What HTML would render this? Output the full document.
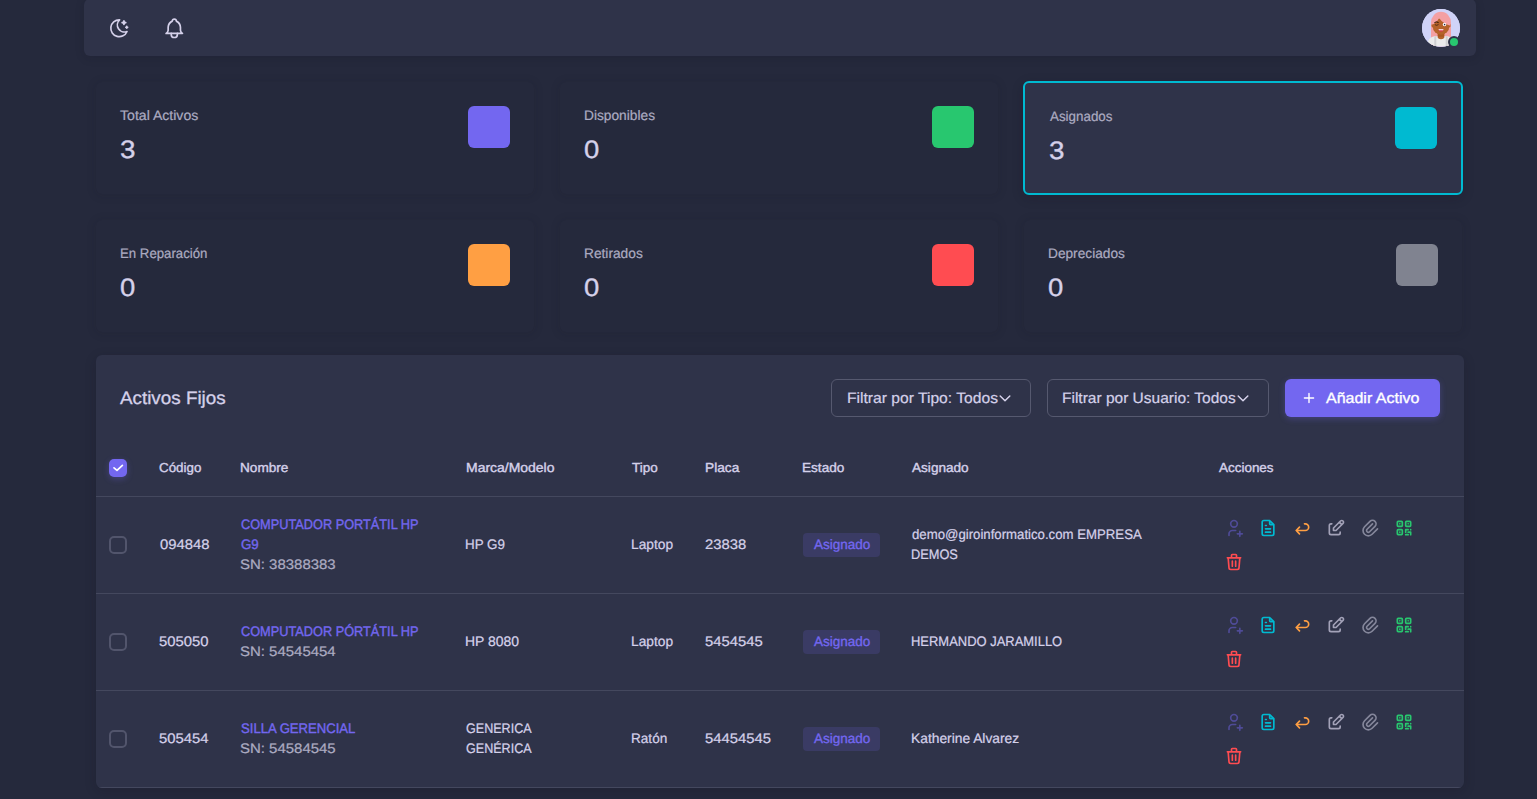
<!DOCTYPE html>
<html lang="es">
<head>
<meta charset="utf-8">
<title>Activos Fijos</title>
<style>
*{box-sizing:border-box;margin:0;padding:0}
html,body{width:1537px;height:799px;overflow:hidden;background:#25293c}
body{font-family:"Liberation Sans",sans-serif;color:#acabc1;font-size:15px;position:relative}
.t{position:absolute;white-space:nowrap;text-rendering:geometricPrecision;transform-origin:0 50%;font-weight:400;display:block}
.defs{position:absolute;width:0;height:0;overflow:hidden}
/* navbar */
.navbar{position:absolute;left:84px;top:-1px;width:1392px;height:57px;background:#2f3349;border-radius:6px;box-shadow:0 2px 10px rgba(19,17,32,.16)}
.navbar .ni{position:absolute;fill:none;stroke:#d5d1ea;stroke-linecap:round;stroke-linejoin:round}
.avatar{position:absolute;left:1338px;top:10px;width:38px;height:38px;border-radius:50%;overflow:hidden;background:#d0d3f8}
.avatar svg{display:block}
.online{position:absolute;left:1365.9px;top:38.8px;width:8px;height:8px;border-radius:50%;background:#28c76f;box-shadow:0 0 0 2px #2f3349}
/* stat cards */
.stat{position:absolute;width:438px;height:112px;border-radius:6px;background:#25293c;box-shadow:0 1px 8px 2px rgba(19,17,32,.09)}
.stat.sel{width:440px;height:114px;background:#2f3349;border:2px solid #00bad1;box-shadow:0 3px 12px rgba(19,17,32,.2)}
.stat .sq{position:absolute;right:24px;top:24px;width:42px;height:42px;border-radius:6px}
.stat.sel .sq{right:24px;top:24px}
.lbl{line-height:16px;color:#acabc1;-webkit-text-stroke:.2px #acabc1}
.num{line-height:32px;color:#d5d1ea;-webkit-text-stroke:.35px #d5d1ea}
/* table card */
.tcard{position:absolute;left:96px;top:355px;width:1368px;height:433px;overflow:hidden;background:#2f3349;border-radius:6px;box-shadow:0 3px 12px rgba(19,17,32,.2)}
.h5{line-height:26px;color:#d5d1ea;-webkit-text-stroke:.3px #d5d1ea}
.fbtn{position:absolute;top:24px;height:38px;border:1px solid #56596f;border-radius:6px}
.ftxt{line-height:20px;color:#d5d1ea;-webkit-text-stroke:.2px #d5d1ea}
.chev{position:absolute;fill:none;stroke:#d5d1ea;stroke-width:1.5;stroke-linecap:round;stroke-linejoin:round}
.addbtn{position:absolute;left:1189px;top:24px;width:155px;height:38px;border-radius:6px;background:#7367f0;box-shadow:0 2px 6px rgba(115,103,240,.3)}
.plus{position:absolute;left:18px;top:13px;fill:none;stroke:#fff;stroke-width:1.4;stroke-linecap:round}
.atxt{line-height:20px;color:#fff;-webkit-text-stroke:.35px #fff}
.hr{position:absolute;left:0;width:1368px;height:1px;background:#44485e}
.th{line-height:16px;color:#d5d1ea;-webkit-text-stroke:.38px #d5d1ea}
.td{line-height:20px;color:#d5d1ea;-webkit-text-stroke:.22px #d5d1ea}
.td.link{color:#7367f0;-webkit-text-stroke:.38px #7367f0}
.td.mut{color:#acabc1;-webkit-text-stroke:.22px #acabc1}
.cb{position:absolute;left:13px;width:18px;height:18px;border:2px solid #52556c;border-radius:5px}
.cb.on{background:#7367f0;border:0;box-shadow:0 2px 6px rgba(115,103,240,.3)}
.cb svg{display:block;fill:none;stroke:#fff;stroke-width:1.7;stroke-linecap:round;stroke-linejoin:round}
.badge{position:absolute;left:707px;width:77px;height:24px;border-radius:4px;background:#3a3b64}
.btxt{line-height:16px;color:#7367f0;-webkit-text-stroke:.35px #7367f0}
.ic{position:absolute;fill:none;stroke-width:2;stroke-linecap:round;stroke-linejoin:round}
.ic.useradd{stroke:#4f4b97}
.ic.filetext{stroke:#00bad1}
.ic.goback{stroke:#ff9f43}
.ic.editbox{stroke:#a3a2b8}
.ic.attach{stroke:#85879b}
.ic.qr{stroke:#28c76f}
.ic.trash{stroke:#ff4c51}
</style>
</head>
<body>
<svg class="defs" aria-hidden="true"><defs>
<symbol id="i-useradd" viewBox="0 0 24 24"><path d="M8 7a4 4 0 1 0 8 0a4 4 0 0 0 -8 0M16 19h6M19 16v6M6 21v-2a4 4 0 0 1 4 -4h4"/></symbol>
<symbol id="i-filetext" viewBox="0 0 24 24"><path d="M14 3v4a1 1 0 0 0 1 1h4M17 21h-10a2 2 0 0 1 -2 -2v-14a2 2 0 0 1 2 -2h7l5 5v11a2 2 0 0 1 -2 2zM9 9h1M9 13h6M9 17h6"/></symbol>
<symbol id="i-goback" viewBox="0 0 24 24"><path d="M9 11l-4 4l4 4m-4 -4h11a4 4 0 0 0 0 -8h-1"/></symbol>
<symbol id="i-editbox" viewBox="0 0 24 24"><path d="M7 7h-1a2 2 0 0 0 -2 2v9a2 2 0 0 0 2 2h9a2 2 0 0 0 2 -2v-1M20.385 6.585a2.100 2.100 0 0 0 -2.970 -2.970l-8.415 8.385v3h3l8.385 -8.415zM16 5l3 3"/></symbol>
<symbol id="i-attach" viewBox="0 0 24 24"><path d="M15 7l-6.500 6.500a1.500 1.500 0 0 0 3 3l6.500 -6.500a3 3 0 0 0 -6 -6l-6.500 6.500a4.500 4.500 0 0 0 9 9l6.500 -6.500"/></symbol>
<symbol id="i-qr" viewBox="0 0 24 24"><path d="M4 5a1 1 0 0 1 1 -1h4a1 1 0 0 1 1 1v4a1 1 0 0 1 -1 1h-4a1 1 0 0 1 -1 -1zM7 17v.01M14 5a1 1 0 0 1 1 -1h4a1 1 0 0 1 1 1v4a1 1 0 0 1 -1 1h-4a1 1 0 0 1 -1 -1zM7 7v.01M4 15a1 1 0 0 1 1 -1h4a1 1 0 0 1 1 1v4a1 1 0 0 1 -1 1h-4a1 1 0 0 1 -1 -1zM17 7v.01M14 14h3M20 14v.01M14 14v3M14 20h3M17 17h3M20 17v3"/></symbol>
<symbol id="i-trash" viewBox="0 0 24 24"><path d="M4 7h16M10 11v6M14 11v6M5 7l1 12a2 2 0 0 0 2 2h8a2 2 0 0 0 2 -2l1 -12M9 7v-3a1 1 0 0 1 1 -1h4a1 1 0 0 1 1 1v3"/></symbol>
</defs></svg>

<header class="navbar">
 <svg class="ni" style="left:23.85px;top:17.75px;stroke-width:1.75" width="22.5" height="22.5" viewBox="0 0 24 24"><path d="M12 3c.132 0 .263 0 .393 0a7.500 7.500 0 0 0 7.920 12.446a9 9 0 1 1 -8.313 -12.454z"/><path d="M17 4a2 2 0 0 0 2 2a2 2 0 0 0 -2 2a2 2 0 0 0 -2 -2a2 2 0 0 0 2 -2"/><path d="M19 11h2m-1 -1v2"/></svg>
 <svg class="ni" style="left:77.700px;top:16.700px;stroke-width:1.65" width="24.6" height="24.6" viewBox="0 0 24 24"><path d="M10 5a2 2 0 1 1 4 0a7 7 0 0 1 4 6v3a4 4 0 0 0 2 3h-16a4 4 0 0 0 2 -3v-3a7 7 0 0 1 4 -6"/><path d="M9 17v1a3 3 0 0 0 6 0v-1"/></svg>
 <div class="avatar"><svg width="38" height="38" viewBox="0 0 38 38">
  <rect width="38" height="38" fill="#d0d3f8"/><g transform="translate(0,-.8)">
  <path d="M9 38V14.500a10 11 0 0 1 20 0V38z" fill="#f4a0a3"/>
  <path d="M5 38c.5-6.500 3-9.300 8.500-10.300l5.500 1.400l5.500-1.400c5.500 1 8 3.800 8.500 10.300z" fill="#ebebec"/><path d="M12.300 28.300l2 -.5v10.200h-2zM23.700 27.800l2 .5v9.700h-2z" fill="#cfcfd2"/>
  <rect x="15.600" y="23" width="6.800" height="6.600" rx="2" fill="#a9571f"/>
  <path d="M15.600 28.600a3.400 2.400 0 0 0 6.800 0z" fill="#b5622a"/>
  <ellipse cx="19" cy="18.300" rx="8.300" ry="8.200" fill="#b5622a"/>
  <ellipse cx="10.800" cy="17.300" rx="1.300" ry="1.900" fill="#b5622a"/><ellipse cx="27.300" cy="17.300" rx="1.300" ry="1.900" fill="#b5622a"/>
  <path d="M9.500 16.500c.5-5 4-8.500 9-8.500c5.500 0 9.500 3.500 10 9.500c-3.500-.8-8.500-3.300-11.500-7.700c-1.500 3.700-4.500 6-7.500 6.700z" fill="#f4a0a3"/>
  <circle cx="22.500" cy="16.400" r="1.750" fill="#fff"/><circle cx="22.600" cy="16.400" r=".8" fill="#2b2b45"/>
  <path d="M13.200 16.700q1.500 1.100 3-.1" fill="none" stroke="#3a2010" stroke-width=".8" stroke-linecap="round"/>
  <path d="M12.700 14.200q1.800-1.300 3.600 0" fill="none" stroke="#2a1508" stroke-width="1" stroke-linecap="round"/>
  <path d="M16.500 21h5a2.500 2.500 0 0 1 -5 0z" fill="#d23a4e"/><path d="M16.500 21h5q-.2 1-.5 1h-4q-.4-.3-.5-1z" fill="#fff"/></g>
 </svg></div>
 <div class="online"></div>
</header>

<section class="stats">
 <div class="stat" style="left:96px;top:82px">
  <span class="t lbl" id="l1" style="left:23.73px;top:26px;font-size:13.8px;transform:scaleX(1.0210)">Total Activos</span>
  <h3 class="t num" id="n1" style="left:24.05px;top:52px;font-size:25px;transform:scaleX(1.1111)">3</h3>
  <span class="sq" style="background:#7367f0"></span>
 </div>
 <div class="stat" style="left:560px;top:82px">
  <span class="t lbl" id="l2" style="left:23.65px;top:26px;font-size:13.8px;transform:scaleX(0.9955)">Disponibles</span>
  <h3 class="t num" id="n2" style="left:24.19px;top:52px;font-size:25px;transform:scaleX(1.0964)">0</h3>
  <span class="sq" style="background:#28c76f"></span>
 </div>
 <div class="stat sel" style="left:1023px;top:81px">
  <span class="t lbl" id="l3" style="left:25.07px;top:26px;font-size:13.8px;transform:scaleX(0.9696)">Asignados</span>
  <h3 class="t num" id="n3" style="left:23.91px;top:52px;font-size:25px;transform:scaleX(1.1111)">3</h3>
  <span class="sq" style="background:#00bad1"></span>
 </div>
 <div class="stat" style="left:96px;top:220px">
  <span class="t lbl" id="l4" style="left:24.18px;top:26px;font-size:13.8px;transform:scaleX(0.9582)">En Reparación</span>
  <h3 class="t num" id="n4" style="left:24.19px;top:52px;font-size:25px;transform:scaleX(1.0964)">0</h3>
  <span class="sq" style="background:#ff9f43"></span>
 </div>
 <div class="stat" style="left:560px;top:220px">
  <span class="t lbl" id="l5" style="left:23.68px;top:26px;font-size:13.8px;transform:scaleX(0.9951)">Retirados</span>
  <h3 class="t num" id="n5" style="left:24.19px;top:52px;font-size:25px;transform:scaleX(1.0964)">0</h3>
  <span class="sq" style="background:#ff4c51"></span>
 </div>
 <div class="stat" style="left:1024px;top:220px">
  <span class="t lbl" id="l6" style="left:23.53px;top:26px;font-size:13.8px;transform:scaleX(0.9926)">Depreciados</span>
  <h3 class="t num" id="n6" style="left:23.95px;top:52px;font-size:25px;transform:scaleX(1.0964)">0</h3>
  <span class="sq" style="background:#808390"></span>
 </div>
</section>
<main class="tcard">
 <h5 class="t h5" id="h5" style="left:23.75px;top:30px;font-size:18px;transform:scaleX(1.0456)">Activos Fijos</h5>
 <div class="fbtn" style="left:735px;width:200px"><span class="t ftxt" id="f1" style="left:14.59px;top:9px;font-size:15px;transform:scaleX(1.0426)">Filtrar por Tipo: Todos</span><svg class="chev" style="left:165.6px;top:11px" width="14" height="14" viewBox="0 0 14 14"><path d="M2.200 5l4.800 4.800l4.800 -4.800"/></svg></div>
 <div class="fbtn" style="left:951px;width:222px"><span class="t ftxt" id="f2" style="left:13.74px;top:9px;font-size:15px;transform:scaleX(1.0334)">Filtrar por Usuario: Todos</span><svg class="chev" style="left:187.6px;top:11px" width="14" height="14" viewBox="0 0 14 14"><path d="M2.200 5l4.800 4.800l4.800 -4.800"/></svg></div>
 <div class="addbtn"><svg class="plus" width="12" height="12" viewBox="0 0 12 12"><path d="M6 1.400v9.200M1.400 6h9.200"/></svg><span class="t atxt" id="ab" style="left:41.06px;top:10px;font-size:15px;transform:scaleX(1.0666)">Añadir Activo</span></div>
 <div class="thead">
  <div class="cb on" style="top:104px"><svg width="18" height="18" viewBox="0 0 18 18"><path d="M5 8.800L8 11.400L13.400 6.300"/></svg></div>
  <div class="t th" id="h1" style="left:63.05px;top:105px;font-size:13px;transform:scaleX(1.0275)">Código</div>
  <div class="t th" id="h2" style="left:144.16px;top:105px;font-size:13px;transform:scaleX(1.0456)">Nombre</div>
  <div class="t th" id="h3" style="left:369.65px;top:105px;font-size:13px;transform:scaleX(1.0743)">Marca/Modelo</div>
  <div class="t th" id="h4" style="left:536.23px;top:105px;font-size:13px;transform:scaleX(1.0337)">Tipo</div>
  <div class="t th" id="h6" style="left:608.77px;top:105px;font-size:13px;transform:scaleX(1.0532)">Placa</div>
  <div class="t th" id="h7" style="left:706.15px;top:105px;font-size:13px;transform:scaleX(1.0452)">Estado</div>
  <div class="t th" id="h8" style="left:815.86px;top:105px;font-size:13px;transform:scaleX(1.0452)">Asignado</div>
  <div class="t th" id="h9" style="left:1123.48px;top:105px;font-size:13px;transform:scaleX(1.0343)">Acciones</div>
 </div>
 <div class="hr" style="top:141px"></div>
 <div class="tr">
  <div class="cb" style="top:181px"></div>
  <div class="t td" id="r1c" style="left:63.51px;top:180px;font-size:13.8px;transform:scaleX(1.0747)">094848</div>
  <div class="t td link" id="r1n0" style="left:145.25px;top:160px;font-size:13.8px;transform:scaleX(0.9237)">COMPUTADOR PORTÁTIL HP</div>
  <div class="t td link" id="r1n1" style="left:145.25px;top:180px;font-size:13.8px;transform:scaleX(0.9641)">G9</div>
  <div class="t td mut" id="r1s" style="left:144.26px;top:200px;font-size:13.8px;transform:scaleX(1.0844)">SN: 38388383</div>
  <div class="t td" id="r1m0" style="left:369.39px;top:180px;font-size:13.8px;transform:scaleX(0.9719)">HP G9</div>
  <div class="t td" id="r1t" style="left:535.17px;top:180px;font-size:13.8px;transform:scaleX(0.9982)">Laptop</div>
  <div class="t td" id="r1p" style="left:608.69px;top:180px;font-size:13.8px;transform:scaleX(1.0747)">23838</div>
  <div class="t td" id="r1a0" style="left:816.04px;top:170px;font-size:13.8px;transform:scaleX(0.9565)">demo@giroinformatico.com EMPRESA</div>
  <div class="t td" id="r1a1" style="left:815.28px;top:190px;font-size:13.8px;transform:scaleX(0.9264)">DEMOS</div>
  <div class="badge" style="top:178px"><span class="t btxt" id="r1b" style="left:10.68px;top:4px;font-size:13.5px;transform:scaleX(1.0009)">Asignado</span></div>
  <svg class="ic useradd" style="left:1128px;top:163px" width="20" height="20" viewBox="0 0 24 24"><use href="#i-useradd"/></svg>
  <svg class="ic filetext" style="left:1162px;top:163px" width="20" height="20" viewBox="0 0 24 24"><use href="#i-filetext"/></svg>
  <svg class="ic goback" style="left:1196px;top:163px" width="20" height="20" viewBox="0 0 24 24"><use href="#i-goback"/></svg>
  <svg class="ic editbox" style="left:1230px;top:163px" width="20" height="20" viewBox="0 0 24 24"><use href="#i-editbox"/></svg>
  <svg class="ic attach" style="left:1264px;top:163px" width="20" height="20" viewBox="0 0 24 24"><use href="#i-attach"/></svg>
  <svg class="ic qr" style="left:1298px;top:163px" width="20" height="20" viewBox="0 0 24 24"><use href="#i-qr"/></svg>
  <svg class="ic trash" style="left:1128px;top:197px" width="20" height="20" viewBox="0 0 24 24"><use href="#i-trash"/></svg>
 </div>
 <div class="hr" style="top:238px"></div>
 <div class="tr">
  <div class="cb" style="top:278px"></div>
  <div class="t td" id="r2c" style="left:63.40px;top:277px;font-size:13.8px;transform:scaleX(1.0747)">505050</div>
  <div class="t td link" id="r2n0" style="left:145.25px;top:267px;font-size:13.8px;transform:scaleX(0.9237)">COMPUTADOR PÓRTÁTIL HP</div>
  <div class="t td mut" id="r2s" style="left:144.26px;top:287px;font-size:13.8px;transform:scaleX(1.0844)">SN: 54545454</div>
  <div class="t td" id="r2m0" style="left:369.39px;top:277px;font-size:13.8px;transform:scaleX(1.0112)">HP 8080</div>
  <div class="t td" id="r2t" style="left:535.17px;top:277px;font-size:13.8px;transform:scaleX(0.9982)">Laptop</div>
  <div class="t td" id="r2p" style="left:609.11px;top:277px;font-size:13.8px;transform:scaleX(1.0747)">5454545</div>
  <div class="t td" id="r2a0" style="left:815.09px;top:277px;font-size:13.8px;transform:scaleX(0.9392)">HERMANDO JARAMILLO</div>
  <div class="badge" style="top:275px"><span class="t btxt" id="r2b" style="left:10.68px;top:4px;font-size:13.5px;transform:scaleX(1.0009)">Asignado</span></div>
  <svg class="ic useradd" style="left:1128px;top:260px" width="20" height="20" viewBox="0 0 24 24"><use href="#i-useradd"/></svg>
  <svg class="ic filetext" style="left:1162px;top:260px" width="20" height="20" viewBox="0 0 24 24"><use href="#i-filetext"/></svg>
  <svg class="ic goback" style="left:1196px;top:260px" width="20" height="20" viewBox="0 0 24 24"><use href="#i-goback"/></svg>
  <svg class="ic editbox" style="left:1230px;top:260px" width="20" height="20" viewBox="0 0 24 24"><use href="#i-editbox"/></svg>
  <svg class="ic attach" style="left:1264px;top:260px" width="20" height="20" viewBox="0 0 24 24"><use href="#i-attach"/></svg>
  <svg class="ic qr" style="left:1298px;top:260px" width="20" height="20" viewBox="0 0 24 24"><use href="#i-qr"/></svg>
  <svg class="ic trash" style="left:1128px;top:294px" width="20" height="20" viewBox="0 0 24 24"><use href="#i-trash"/></svg>
 </div>
 <div class="hr" style="top:335px"></div>
 <div class="tr">
  <div class="cb" style="top:375px"></div>
  <div class="t td" id="r3c" style="left:63.40px;top:374px;font-size:13.8px;transform:scaleX(1.0747)">505454</div>
  <div class="t td link" id="r3n0" style="left:145.25px;top:364px;font-size:13.8px;transform:scaleX(0.9502)">SILLA GERENCIAL</div>
  <div class="t td mut" id="r3s" style="left:144.26px;top:384px;font-size:13.8px;transform:scaleX(1.0844)">SN: 54584545</div>
  <div class="t td" id="r3m0" style="left:370.23px;top:364px;font-size:13.8px;transform:scaleX(0.9111)">GENERICA</div>
  <div class="t td" id="r3m1" style="left:370.23px;top:384px;font-size:13.8px;transform:scaleX(0.9111)">GENÉRICA</div>
  <div class="t td" id="r3t" style="left:534.54px;top:374px;font-size:13.8px;transform:scaleX(0.9850)">Ratón</div>
  <div class="t td" id="r3p" style="left:609.11px;top:374px;font-size:13.8px;transform:scaleX(1.0747)">54454545</div>
  <div class="t td" id="r3a0" style="left:815.37px;top:374px;font-size:13.8px;transform:scaleX(1.0005)">Katherine Alvarez</div>
  <div class="badge" style="top:372px"><span class="t btxt" id="r3b" style="left:10.68px;top:4px;font-size:13.5px;transform:scaleX(1.0009)">Asignado</span></div>
  <svg class="ic useradd" style="left:1128px;top:357px" width="20" height="20" viewBox="0 0 24 24"><use href="#i-useradd"/></svg>
  <svg class="ic filetext" style="left:1162px;top:357px" width="20" height="20" viewBox="0 0 24 24"><use href="#i-filetext"/></svg>
  <svg class="ic goback" style="left:1196px;top:357px" width="20" height="20" viewBox="0 0 24 24"><use href="#i-goback"/></svg>
  <svg class="ic editbox" style="left:1230px;top:357px" width="20" height="20" viewBox="0 0 24 24"><use href="#i-editbox"/></svg>
  <svg class="ic attach" style="left:1264px;top:357px" width="20" height="20" viewBox="0 0 24 24"><use href="#i-attach"/></svg>
  <svg class="ic qr" style="left:1298px;top:357px" width="20" height="20" viewBox="0 0 24 24"><use href="#i-qr"/></svg>
  <svg class="ic trash" style="left:1128px;top:391px" width="20" height="20" viewBox="0 0 24 24"><use href="#i-trash"/></svg>
 </div>
 <div class="hr" style="top:432px"></div>
</main>
</body>
</html>
